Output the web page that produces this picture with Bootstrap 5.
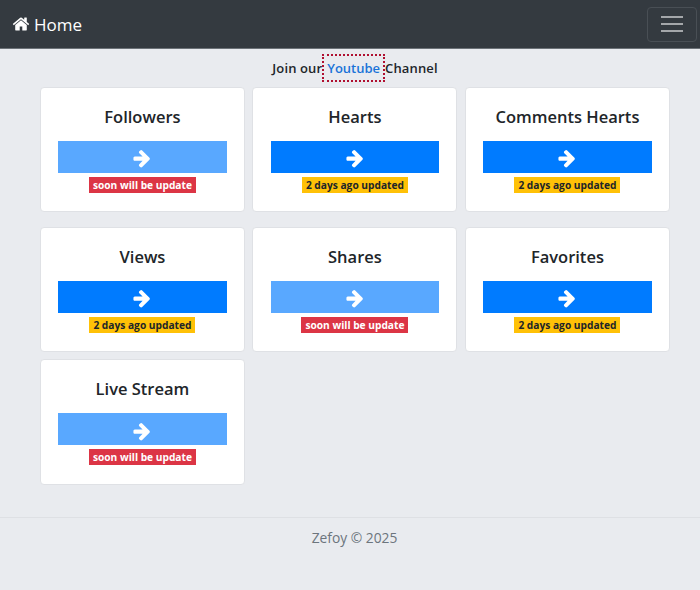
<!DOCTYPE html>
<html lang="en">
<head>
<meta charset="utf-8">
<title>Zefoy</title>
<link href="https://cdn.jsdelivr.net/npm/bootstrap@5.3.0/dist/css/bootstrap.min.css" rel="stylesheet">
<style>
body{background:#e9ebef;font-family:"Open Sans","Noto Sans",sans-serif;color:#212529;font-size:14px;min-height:590px}
.top-bar{background:#343a40;height:49px;padding:0 3px 0 12px;border-bottom:1px solid #6c7278}
.brand-link{color:#fff;font-size:17px;text-decoration:none;gap:4px;padding-top:1px}
.brand-link svg{width:18px;height:18px;fill:#fff;margin-top:-2px}
.burger-box{width:50px;height:35px;border:1px solid #494f55;border-radius:4px;background:transparent;padding:0;flex-direction:column;gap:5px}
.burger-box span{display:block;width:22px;height:2px;background:#a4a7aa}
.join-line{height:38px;font-size:13px;font-weight:600;padding-left:10px;padding-top:1px;letter-spacing:.01em}
.yt-link{color:#1a73d8;text-decoration:none;outline:2px dotted #b01030;outline-offset:0;padding:5px 3px 4px;line-height:15px;margin:0 2px 1px;letter-spacing:0}
.tile-grid{display:grid;grid-template-columns:205px 205px 205px;column-gap:7.5px;margin-left:39.95px;justify-content:start}
.tile{height:125px;border:1px solid #dfe1e5;border-radius:4px;background:#fff;padding:17px 17.1px 0}
.tile-title{font-size:16.5px;font-weight:600;line-height:24px;margin:0 0 12px;text-align:center}
.go-btn{height:31.5px;width:100%;border:0;border-radius:0;padding:0;background:#007bff}
.go-btn.dim{background:#59a8ff}
.go-btn svg{width:20px;height:20px;fill:#fff}
.stat-tag{font-size:10.2px;font-weight:700;border-radius:0;padding:2px 4px;line-height:12.5px;margin-top:3px;display:inline-block}
.stat-wait{background:#dc3545;color:#fff}
.stat-ago{background:#ffc107;color:#212529}
.row-a{margin-bottom:15px}
.row-b{margin-bottom:7.4px}
.row-c .tile{height:125.6px}
.foot-bar{margin-top:32px;border-top:1px solid #dee0e4;padding-top:10px;padding-left:9px;color:#6c757d;font-size:13.8px;text-align:center}
</style>
</head>
<body>
<nav class="top-bar d-flex align-items-center justify-content-between">
  <a class="brand-link d-flex align-items-center" href="#">
    <svg viewBox="0 0 1792 1792"><path d="M1472 992v480q0 26-19 45t-45 19h-384v-384h-256v384h-384q-26 0-45-19t-19-45v-480q0-1 .5-3t.5-3l575-474 575 474q1 2 1 6zm223-69l-62 74q-8 9-21 11h-3q-13 0-21-7l-692-577-692 577q-12 8-24 7-13-2-21-11l-62-74q-8-10-7-23.5t11-21.5l719-599q32-26 76-26t76 26l244 204v-195q0-14 9-23t23-9h192q14 0 23 9t9 23v408l219 182q10 8 11 21.5t-7 23.5z"/></svg>
    Home
  </a>
  <button class="burger-box d-flex align-items-center justify-content-center" type="button" aria-label="Menu"><span></span><span></span><span></span></button>
</nav>
<div class="join-line d-flex align-items-center justify-content-center">
  <span>Join our</span><a class="yt-link" href="#">Youtube</a><span>Channel</span>
</div>
<div class="tile-grid row-a">
  <div class="tile"><h5 class="tile-title">Followers</h5><button class="go-btn dim btn d-block"><svg viewBox="0 0 1792 1792"><path d="M1600 960q0 54-37 91l-651 651q-39 37-91 37-51 0-90-37l-75-75q-38-38-38-91t38-91l293-293h-704q-52 0-84.5-37.5t-32.5-90.5v-128q0-53 32.5-90.5t84.5-37.5h704l-293-294q-38-36-38-90t38-90l75-75q38-38 90-38 53 0 91 38l651 651q37 35 37 90z"/></svg></button><div class="text-center"><span class="stat-tag stat-wait">soon will be update</span></div></div>
  <div class="tile"><h5 class="tile-title">Hearts</h5><button class="go-btn btn d-block"><svg viewBox="0 0 1792 1792"><path d="M1600 960q0 54-37 91l-651 651q-39 37-91 37-51 0-90-37l-75-75q-38-38-38-91t38-91l293-293h-704q-52 0-84.5-37.5t-32.5-90.5v-128q0-53 32.5-90.5t84.5-37.5h704l-293-294q-38-36-38-90t38-90l75-75q38-38 90-38 53 0 91 38l651 651q37 35 37 90z"/></svg></button><div class="text-center"><span class="stat-tag stat-ago">2 days ago updated</span></div></div>
  <div class="tile"><h5 class="tile-title">Comments Hearts</h5><button class="go-btn btn d-block"><svg viewBox="0 0 1792 1792"><path d="M1600 960q0 54-37 91l-651 651q-39 37-91 37-51 0-90-37l-75-75q-38-38-38-91t38-91l293-293h-704q-52 0-84.5-37.5t-32.5-90.5v-128q0-53 32.5-90.5t84.5-37.5h704l-293-294q-38-36-38-90t38-90l75-75q38-38 90-38 53 0 91 38l651 651q37 35 37 90z"/></svg></button><div class="text-center"><span class="stat-tag stat-ago">2 days ago updated</span></div></div>
</div>
<div class="tile-grid row-b">
  <div class="tile"><h5 class="tile-title">Views</h5><button class="go-btn btn d-block"><svg viewBox="0 0 1792 1792"><path d="M1600 960q0 54-37 91l-651 651q-39 37-91 37-51 0-90-37l-75-75q-38-38-38-91t38-91l293-293h-704q-52 0-84.5-37.5t-32.5-90.5v-128q0-53 32.5-90.5t84.5-37.5h704l-293-294q-38-36-38-90t38-90l75-75q38-38 90-38 53 0 91 38l651 651q37 35 37 90z"/></svg></button><div class="text-center"><span class="stat-tag stat-ago">2 days ago updated</span></div></div>
  <div class="tile"><h5 class="tile-title">Shares</h5><button class="go-btn dim btn d-block"><svg viewBox="0 0 1792 1792"><path d="M1600 960q0 54-37 91l-651 651q-39 37-91 37-51 0-90-37l-75-75q-38-38-38-91t38-91l293-293h-704q-52 0-84.5-37.5t-32.5-90.5v-128q0-53 32.5-90.5t84.5-37.5h704l-293-294q-38-36-38-90t38-90l75-75q38-38 90-38 53 0 91 38l651 651q37 35 37 90z"/></svg></button><div class="text-center"><span class="stat-tag stat-wait">soon will be update</span></div></div>
  <div class="tile"><h5 class="tile-title">Favorites</h5><button class="go-btn btn d-block"><svg viewBox="0 0 1792 1792"><path d="M1600 960q0 54-37 91l-651 651q-39 37-91 37-51 0-90-37l-75-75q-38-38-38-91t38-91l293-293h-704q-52 0-84.5-37.5t-32.5-90.5v-128q0-53 32.5-90.5t84.5-37.5h704l-293-294q-38-36-38-90t38-90l75-75q38-38 90-38 53 0 91 38l651 651q37 35 37 90z"/></svg></button><div class="text-center"><span class="stat-tag stat-ago">2 days ago updated</span></div></div>
</div>
<div class="tile-grid row-c">
  <div class="tile"><h5 class="tile-title">Live Stream</h5><button class="go-btn dim btn d-block"><svg viewBox="0 0 1792 1792"><path d="M1600 960q0 54-37 91l-651 651q-39 37-91 37-51 0-90-37l-75-75q-38-38-38-91t38-91l293-293h-704q-52 0-84.5-37.5t-32.5-90.5v-128q0-53 32.5-90.5t84.5-37.5h704l-293-294q-38-36-38-90t38-90l75-75q38-38 90-38 53 0 91 38l651 651q37 35 37 90z"/></svg></button><div class="text-center"><span class="stat-tag stat-wait">soon will be update</span></div></div>
</div>
<footer class="foot-bar">Zefoy © 2025</footer>
<script src="https://cdn.jsdelivr.net/npm/bootstrap@5.3.0/dist/js/bootstrap.bundle.min.js"></script>
</body>
</html>
